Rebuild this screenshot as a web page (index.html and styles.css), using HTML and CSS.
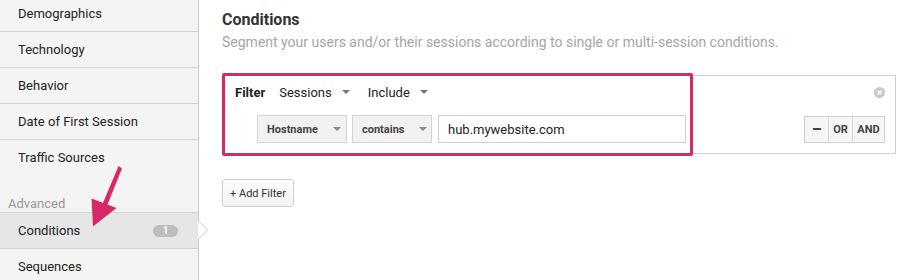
FILE: index.html
```html
<!DOCTYPE html>
<html lang="en">

<head>
    <meta charset="UTF-8">
    <meta name="viewport" content="width=device-width, initial-scale=1.0">
    <title>Segment - Conditions</title>
    <link rel="stylesheet" href="styles.css">
</head>

<body>
    <div class="sidebar">
        <ul class="nav">
            <li>Demographics</li>
            <li>Technology</li>
            <li>Behavior</li>
            <li>Date of First Session</li>
            <li>Traffic Sources</li>
        </ul>
        <div class="nav-group">Advanced</div>
        <ul class="nav nav-advanced">
            <li class="active">Conditions <span class="badge">1</span></li>
            <li>Sequences</li>
        </ul>
    </div>

    <div class="main">
        <h2>Conditions</h2>
        <p class="subtitle">Segment your users and/or their sessions according to single or multi-session conditions.</p>

        <div class="filter-box">
            <div class="filter-head">
                <span class="filter-label">Filter</span>
                <span class="dropdown">Sessions <i class="caret"></i></span>
                <span class="dropdown">Include <i class="caret"></i></span>
                <span class="close-btn">
                    <svg width="11" height="11" viewBox="0 0 11 11">
                        <circle cx="5.5" cy="5.5" r="5.5" fill="#c8c8c8" />
                        <path d="M3.4 3.4 L7.6 7.6 M7.6 3.4 L3.4 7.6" stroke="#fff" stroke-width="1.4" />
                    </svg>
                </span>
            </div>
            <div class="filter-row">
                <span class="select select-dim">Hostname <i class="caret"></i></span>
                <span class="select select-op">contains <i class="caret"></i></span>
                <input class="value" type="text" value="hub.mywebsite.com">
                <div class="logic">
                    <span class="logic-btn minus"><i class="dash"></i></span>
                    <span class="logic-btn or">OR</span>
                    <span class="logic-btn and">AND</span>
                </div>
            </div>
            <div class="highlight"></div>
        </div>

        <button class="add-filter">+ Add Filter</button>
    </div>

    <!-- annotation arrow -->
    <svg class="annotation" width="903" height="280" viewBox="0 0 903 280">
        <polygon points="118.5,166 122,168.5 107,206 102.5,204" fill="#d62a68" />
        <polygon points="91.5,198.5 116.5,208 93,226.5" fill="#d62a68" />
    </svg>
</body>

</html>
```

FILE: styles.css
```css
body {
    font-family: Roboto, "Liberation Sans", Arial, sans-serif;
    margin: 0;
    display: flex;
    height: 280px;
    overflow: hidden;
    color: #222;
    position: relative;
}

.sidebar {
    width: 198px;
    flex-shrink: 0;
    background-color: #f4f4f4;
    border-right: 1px solid #c9c9c9;
    font-size: 13px;
}

.nav {
    list-style: none;
    margin: -4px 0 0 0;
    padding: 0;
}

.nav li {
    height: 35px;
    line-height: 35px;
    padding-left: 18px;
    border-bottom: 1px solid #d2d2d2;
    position: relative;
}

.nav li:last-child {
    border-bottom: none;
}

.nav-group {
    padding: 20px 0 0 8px;
    line-height: 17px;
    color: #999;
}

.nav-advanced {
    margin-top: 0;
    border-top: 1px solid #d2d2d2;
}

.nav .active {
    background-color: #e6e6e6;
    border-bottom: 1px solid #d2d2d2;
}

.nav .active::before,
.nav .active::after {
    content: "";
    position: absolute;
    top: 8px;
    width: 0;
    height: 0;
    border-top: 9px solid transparent;
    border-bottom: 9px solid transparent;
}

.nav .active::before {
    right: -10px;
    border-left: 9px solid #c9c9c9;
}

.nav .active::after {
    right: -9px;
    border-left: 9px solid #fff;
}

.badge {
    position: absolute;
    left: 153px;
    top: 12px;
    width: 25px;
    height: 12px;
    line-height: 12px;
    border-radius: 6px;
    background-color: #bdbdbd;
    color: #fff;
    font-size: 10px;
    font-weight: bold;
    text-align: center;
}

.main {
    flex: 1;
    padding: 10px 7px 0 23px;
}

h2 {
    margin: 0;
    font-size: 16px;
    line-height: 20px;
    color: #333;
}

.subtitle {
    margin: 3px 0 0 0;
    font-size: 14px;
    line-height: 18px;
    color: #a5a5a5;
}

.filter-box {
    position: relative;
    margin-top: 24px;
    border: 1px solid #cfcfcf;
    padding: 7px 10px 10px 12px;
}

.filter-head {
    display: flex;
    align-items: center;
    height: 18px;
    font-size: 13px;
}

.filter-label {
    font-weight: bold;
    margin-right: 14px;
}

.dropdown {
    display: inline-flex;
    align-items: center;
    margin-right: 18px;
    color: #222;
}

.caret {
    display: inline-block;
    width: 0;
    height: 0;
    margin-left: 10px;
    border-left: 4px solid transparent;
    border-right: 4px solid transparent;
    border-top: 4px solid #777;
}

.close-btn {
    margin-left: auto;
    display: flex;
}

.filter-row {
    display: flex;
    align-items: center;
    margin-top: 14px;
    padding-left: 22px;
}

.select {
    display: inline-flex;
    align-items: center;
    box-sizing: border-box;
    height: 28px;
    padding-left: 9px;
    margin-right: 5px;
    background-color: #f1f1f1;
    border: 1px solid #d4d4d4;
    font-size: 11px;
    font-weight: bold;
    color: #444;
}

.select .caret {
    border-top-color: #888;
}

.select-dim {
    width: 90px;
}

.select-dim .caret {
    margin-left: 15px;
}

.select-op {
    width: 80px;
    margin-right: 6px;
}

.select-op .caret {
    margin-left: 15px;
}

.value {
    box-sizing: border-box;
    width: 248px;
    height: 28px;
    border: 1px solid #cfcfcf;
    padding: 0 9px;
    font-family: inherit;
    font-size: 13px;
    color: #222;
    outline: none;
}

.logic {
    display: flex;
    margin-left: auto;
    border: 1px solid #cfcfcf;
    background-color: #f5f5f5;
}

.logic-btn {
    display: flex;
    align-items: center;
    justify-content: center;
    height: 25px;
    font-size: 11px;
    font-weight: bold;
    color: #444;
    border-left: 1px solid #d8d8d8;
}

.logic-btn:first-child {
    border-left: none;
}

.minus {
    width: 23px;
}

.dash {
    display: block;
    width: 8px;
    height: 2px;
    background-color: #444;
}

.or {
    width: 23px;
}

.and {
    width: 31px;
}

.highlight {
    position: absolute;
    left: -1px;
    top: -3px;
    width: 465px;
    height: 77px;
    border: 3px solid #d62a68;
    border-radius: 2px;
    pointer-events: none;
}

.add-filter {
    margin-top: 25px;
    height: 28px;
    padding: 0 7px;
    border: 1px solid #cfcfcf;
    border-radius: 3px;
    background: linear-gradient(#fdfdfd, #f2f2f2);
    font-family: inherit;
    font-size: 11px;
    color: #333;
}

.annotation {
    position: absolute;
    left: 0;
    top: 0;
    pointer-events: none;
}
```
